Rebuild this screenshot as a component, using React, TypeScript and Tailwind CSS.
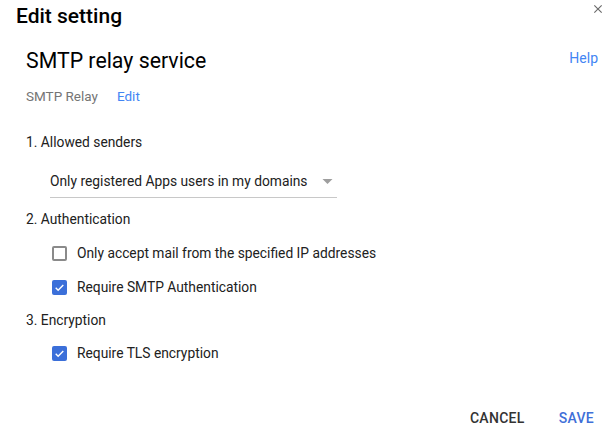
import { useState } from "react";

function Checkbox({ checked, label, onToggle }: { checked: boolean; label: string; onToggle: () => void }) {
  return (
    <label onClick={onToggle} className="flex h-[34px] cursor-pointer items-center pl-[52px]">
      {checked ? (
        <span className="flex h-[15px] w-[15px] shrink-0 items-center justify-center rounded-[2px] bg-[#3b6fd9]">
          <svg viewBox="0 0 24 24" className="h-[13px] w-[13px]" fill="none" stroke="white" strokeWidth="2.6">
            <path d="M5 12.5l4.5 4.5L19 7.5" />
          </svg>
        </span>
      ) : (
        <span className="h-[15px] w-[15px] shrink-0 rounded-[2px] border-2 border-[#8a8a8a]" />
      )}
      <span className="ml-[10px] text-[13.8px] text-[#212121]">{label}</span>
    </label>
  );
}

export default function App() {
  const [ipOnly, setIpOnly] = useState(false);
  const [smtpAuth, setSmtpAuth] = useState(true);
  const [tls, setTls] = useState(true);

  return (
    <div className="h-[438px] w-[615px] bg-white font-['Roboto',sans-serif] text-[#212121]">
      <header className="flex items-start justify-between pl-[16px] pr-[10px] pt-[1px]">
        <h1 className="text-[21px] font-medium leading-[30px] text-black">Edit setting</h1>
        <button className="mt-[1px] text-[#6b6b6b]">
          <svg viewBox="0 0 24 24" className="h-[14px] w-[14px]" fill="currentColor">
            <path d="M19 6.41L17.59 5 12 10.59 6.41 5 5 6.41 10.59 12 5 17.59 6.41 19 12 13.41 17.59 19 19 17.59 13.41 12z" />
          </svg>
        </button>
      </header>

      <div className="px-[26px]">
        <div className="mt-[15px] flex items-center justify-between">
          <h2 className="text-[21.3px] leading-[30px] text-black">SMTP relay service</h2>
          <a className="-mr-[9px] -mt-[5px] text-[14px] text-[#4285f4]">Help</a>
        </div>

        <div className="mt-[10px] flex items-center text-[13.5px] leading-[20px]">
          <span className="text-[#757575]">SMTP Relay</span>
          <a className="ml-[19px] text-[#4285f4]">Edit</a>
        </div>

        <p className="mt-[26px] text-[13.8px] leading-[20px]">1. Allowed senders</p>

        <div className="ml-[24px] mt-[19px] flex w-[287px] items-center justify-between border-b border-[#c8c8c8] pb-[6px]">
          <span className="text-[13.8px] leading-[20px]">Only registered Apps users in my domains</span>
          <svg viewBox="0 0 10 5" className="mr-[4px] h-[5px] w-[11px]" fill="#9e9e9e">
            <path d="M0 0h10L5 5z" />
          </svg>
        </div>

        <p className="mt-[11px] text-[13.8px] leading-[20px]">2. Authentication</p>
      </div>

      <div className="mt-[7px]">
        <Checkbox checked={ipOnly} onToggle={() => setIpOnly(!ipOnly)} label="Only accept mail from the specified IP addresses" />
        <Checkbox checked={smtpAuth} onToggle={() => setSmtpAuth(!smtpAuth)} label="Require SMTP Authentication" />
      </div>

      <p className="mt-[6px] px-[26px] text-[13.8px] leading-[20px]">3. Encryption</p>

      <div className="mt-[6px]">
        <Checkbox checked={tls} onToggle={() => setTls(!tls)} label="Require TLS encryption" />
      </div>

      <footer className="mt-[38px] flex justify-end gap-[34px] pr-[21px]">
        <button className="text-[14px] font-medium tracking-[0.3px] text-[#333]">CANCEL</button>
        <button className="text-[14px] font-medium tracking-[0.3px] text-[#3f6fd8]">SAVE</button>
      </footer>
    </div>
  );
}
